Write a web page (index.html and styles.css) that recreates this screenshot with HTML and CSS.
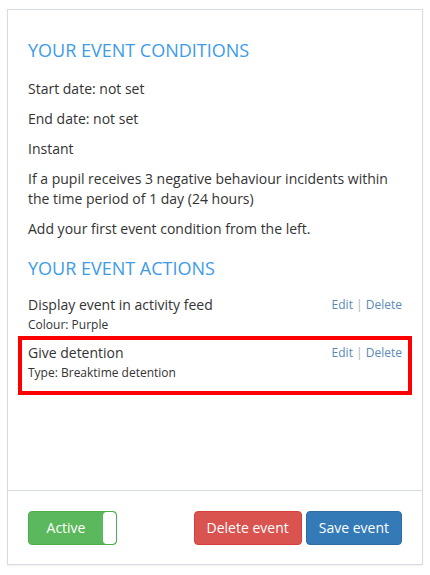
FILE: index.html
```html
<!DOCTYPE html>
<html lang="en">

<head>
    <meta charset="UTF-8">
    <meta name="viewport" content="width=device-width, initial-scale=1.0">
    <title>Event</title>
    <link rel="stylesheet" href="styles.css">
</head>

<body>
    <div class="panel">
        <div class="panel-body">
            <h4 class="section-title">YOUR EVENT CONDITIONS</h4>
            <p>Start date: not set</p>
            <p>End date: not set</p>
            <p>Instant</p>
            <p>If a pupil receives 3 negative behaviour incidents within the time period of 1 day (24 hours)</p>
            <p>Add your first event condition from the left.</p>

            <h4 class="section-title">YOUR EVENT ACTIONS</h4>
            <div class="action">
                <div class="action-text">
                    <div class="action-name">Display event in activity feed</div>
                    <div class="action-detail">Colour: Purple</div>
                </div>
                <div class="action-links">
                    <a href="#">Edit</a> <span class="sep">|</span> <a href="#">Delete</a>
                </div>
            </div>
            <div class="action highlight">
                <div class="action-text">
                    <div class="action-name">Give detention</div>
                    <div class="action-detail">Type: Breaktime detention</div>
                </div>
                <div class="action-links">
                    <a href="#">Edit</a> <span class="sep">|</span> <a href="#">Delete</a>
                </div>
            </div>
        </div>

        <div class="panel-footer">
            <div class="toggle">
                <span class="toggle-label">Active</span>
                <span class="toggle-knob"></span>
            </div>
            <div class="footer-buttons">
                <button class="btn btn-danger">Delete event</button>
                <button class="btn btn-primary">Save event</button>
            </div>
        </div>
    </div>
</body>

</html>
```

FILE: styles.css
```css
body {
    font-family: 'Open Sans', sans-serif;
    font-size: 14px;
    line-height: 20px;
    color: #333;
    background-color: #fff;
    margin: 0;
    padding: 9px 7px 10px 7px;
}

.panel {
    border: 1px solid #d5dce3;
    box-shadow: 0 1px 2px rgba(0, 0, 0, 0.06);
    background: white;
    height: 556px;
    box-sizing: border-box;
    display: flex;
    flex-direction: column;
}

.panel-body {
    flex: 1;
    padding: 20px 20px 0;
}

.section-title {
    font-size: 18px;
    font-weight: 400;
    line-height: 20px;
    color: #3d9be9;
    margin: 10px 0 19px;
}

p + .section-title {
    margin-top: 19px;
    margin-bottom: 17px;
}

p {
    margin: 0 0 10px;
}

.action {
    display: flex;
    justify-content: space-between;
    margin-bottom: 10px;
}

.action-name {
    line-height: 20px;
}

.action-detail {
    font-size: 12px;
    line-height: 17px;
    margin-top: 1px;
}

.action-links {
    font-size: 12px;
    line-height: 20px;
    color: #aab4be;
}

.action-links a {
    color: #5a8ab8;
    text-decoration: none;
}

.highlight {
    position: relative;
}

.highlight::after {
    content: "";
    position: absolute;
    top: -7px;
    bottom: -14px;
    left: -10px;
    right: -10px;
    border: 4px solid #f00;
}

.panel-footer {
    border-top: 1px solid #d5dce3;
    padding: 20px 20px 19px;
    display: flex;
    justify-content: space-between;
    align-items: center;
}

.toggle {
    display: flex;
    width: 89px;
    height: 34px;
    box-sizing: border-box;
    border: 1px solid #4cae4c;
    border-radius: 4px;
    background: #5cb85c;
    overflow: hidden;
}

.toggle-label {
    flex: 1;
    color: white;
    text-align: center;
    line-height: 32px;
}

.toggle-knob {
    width: 13px;
    background: white;
    border-radius: 4px;
}

.footer-buttons {
    display: flex;
    gap: 4px;
}

.btn {
    font-family: 'Open Sans', sans-serif;
    font-size: 14px;
    line-height: 20px;
    height: 34px;
    padding: 6px 12px;
    color: white;
    border: 1px solid transparent;
    border-radius: 4px;
    cursor: pointer;
}

.btn-danger {
    background-color: #d9534f;
    border-color: #d43f3a;
}

.btn-primary {
    background-color: #337ab7;
    border-color: #2e6da4;
}
```
